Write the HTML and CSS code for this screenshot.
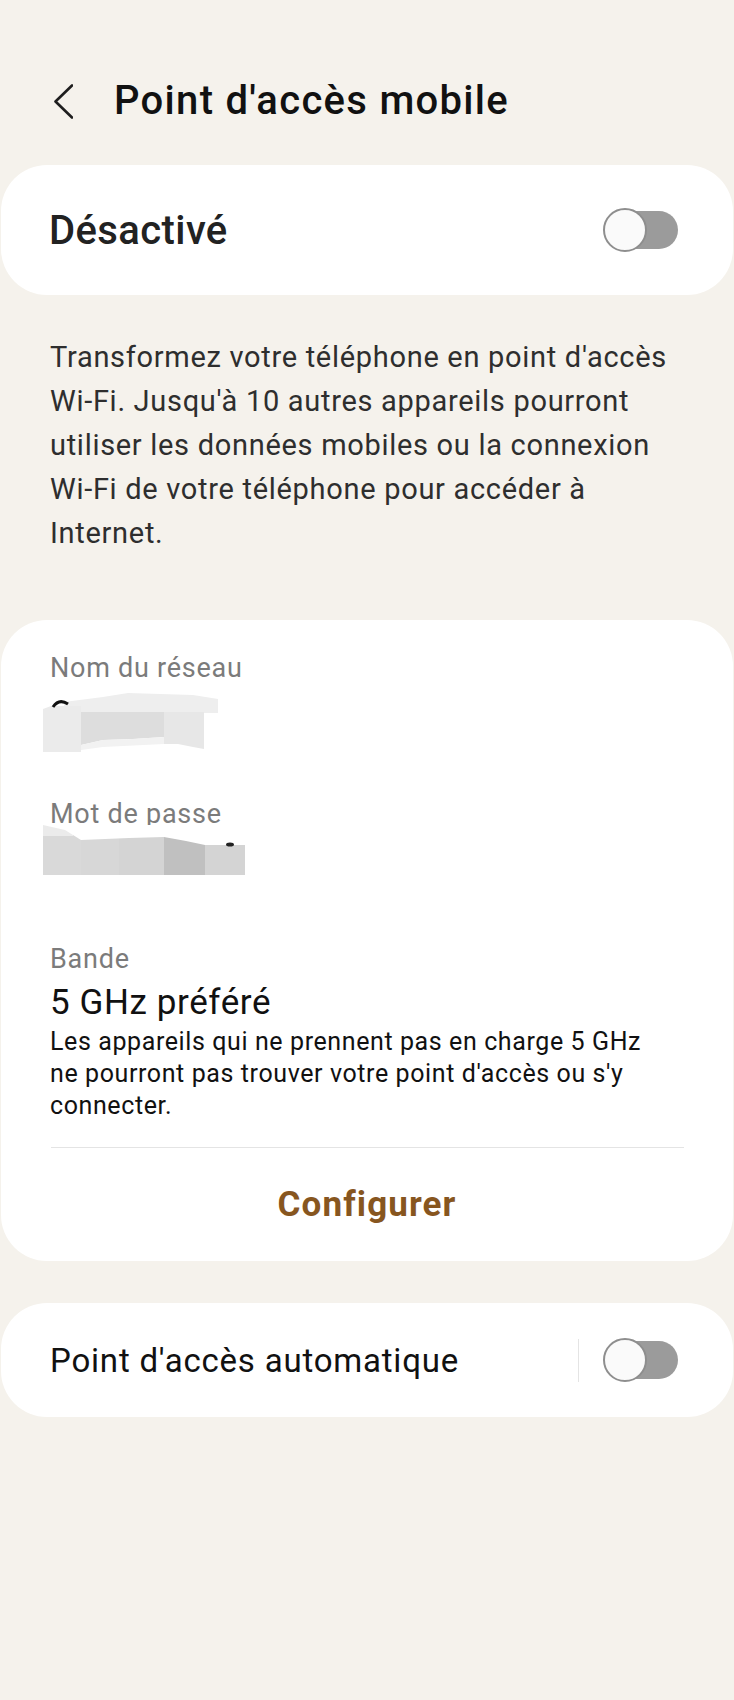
FILE: index.html
```html
<!DOCTYPE html>
<html lang="fr">
<head>
  <meta charset="UTF-8">
  <meta name="viewport" content="width=device-width, initial-scale=1.0">
  <title>Point d'accès mobile</title>
  <link rel="stylesheet" href="styles.css">
</head>
<body>
  <header class="top-bar">
    <button class="back" aria-label="Retour">
      <svg width="20" height="35" viewBox="0 0 20 35"><path d="M19 1.5 L2.5 17.5 L19 33.5" fill="none" stroke="#1e1e1e" stroke-width="2.6" stroke-linecap="round" stroke-linejoin="round"/></svg>
    </button>
    <h1>Point d'accès mobile</h1>
  </header>

  <section class="card main-switch">
    <span>Désactivé</span>
    <span class="switch"></span>
  </section>

  <p class="intro">Transformez votre téléphone en point d'accès Wi-Fi. Jusqu'à 10 autres appareils pourront utiliser les données mobiles ou la connexion Wi-Fi de votre téléphone pour accéder à Internet.</p>

  <section class="card details">
    <div class="field">
      <div class="label">Nom du réseau</div>
      <!-- nom masqué -->
      <svg class="redacted" width="176" height="60" viewBox="0 0 176 60">
        <polygon points="21,9 60,4 85,0 150,2 175,6 175,20 21,20" fill="#eeeeee"/>
        <polygon points="0,16 8,13 38,13 38,59 0,59" fill="#ebebeb"/>
        <polygon points="38,19 121,19 121,44 90,46 60,47 38,52" fill="#dddddd"/>
        <polygon points="38,52 60,47 90,46 121,44 121,51 60,54 38,57" fill="#f2f2f2"/>
        <polygon points="121,19 161,19 161,56 150,54 135,51 121,51" fill="#e7e7e7"/>
        <path d="M10 14 Q16 5 25 11" fill="none" stroke="#111" stroke-width="3"/>
      </svg>
    </div>

    <div class="field pass">
      <div class="label">Mot de passe</div>
      <!-- mot de passe masqué -->
      <svg class="redacted" width="202" height="50" viewBox="0 0 202 50">
        <rect x="0" y="0" width="38" height="50" fill="#d9d9d9"/>
        <rect x="38" y="0" width="38" height="50" fill="#d7d7d7"/>
        <rect x="76" y="0" width="45" height="50" fill="#d4d4d4"/>
        <rect x="121" y="0" width="41" height="50" fill="#c0c0c0"/>
        <rect x="162" y="0" width="40" height="50" fill="#d4d4d4"/>
        <rect x="0" y="0" width="30" height="11" fill="#ebebeb"/>
        <polygon points="0,0 22,5 38,15 86,13 121,12 143,16 162,20 202,20 202,0" fill="#fff"/>
        <ellipse cx="187" cy="19.5" rx="4" ry="2" fill="#222"/>
      </svg>
    </div>

    <div class="field band">
      <div class="label">Bande</div>
      <div class="value">5 GHz préféré</div>
      <div class="hint">Les appareils qui ne prennent pas en charge 5 GHz ne pourront pas trouver votre point d'accès ou s'y connecter.</div>
    </div>

    <div class="divider"></div>
    <button class="configure">Configurer</button>
  </section>

  <section class="card auto-row">
    <span class="auto-label">Point d'accès automatique</span>
    <span class="sep"></span>
    <span class="switch"></span>
  </section>
</body>
</html>
```

FILE: styles.css
```css
body {
  margin: 0;
  background: #f5f2ec;
  font-family: Roboto, "Noto Sans", sans-serif;
  color: #111;
}
.top-bar {
  display: flex;
  align-items: center;
  height: 48px;
  padding: 77px 0 0 53px;
}
.back {
  display: flex;
  width: 20px;
  height: 35px;
  padding: 0;
  margin-right: 41px;
  border: none;
  background: none;
}
.top-bar h1 {
  margin: 0;
  font-size: 40px;
  font-weight: 500;
  line-height: 48px;
  letter-spacing: 1.3px;
  color: #111;
}
.card {
  background: #fff;
  border-radius: 46px;
  margin: 0 1px;
}
.main-switch {
  margin-top: 40px;
  height: 130px;
  display: flex;
  align-items: center;
  justify-content: space-between;
  padding: 0 55px 0 48px;
  font-size: 40px;
  font-weight: 500;
  letter-spacing: 0.4px;
  color: #222;
}
.switch {
  position: relative;
  flex: none;
  width: 68px;
  height: 38px;
  margin-left: 7px;
  border-radius: 19px;
  background: #9b9b9b;
}
.switch::before {
  content: "";
  position: absolute;
  left: -7px;
  top: -3px;
  width: 44px;
  height: 44px;
  box-sizing: border-box;
  border: 2.5px solid #8e8e8e;
  border-radius: 50%;
  background: #fafafa;
}
.intro {
  margin: 40px 0 0;
  padding: 0 48px 0 50px;
  font-size: 29px;
  line-height: 44px;
  letter-spacing: 0.7px;
  color: #2e2e2e;
}
.details {
  margin-top: 65px;
  padding-top: 33px;
}
.field {
  padding: 0 62px 0 49px;
}
.label {
  font-size: 27px;
  line-height: 30px;
  letter-spacing: 0.75px;
  color: #7b7b7b;
}
.redacted {
  display: block;
  margin: 10px 0 0 -7px;
}
.pass {
  margin-top: 46px;
}
.pass .redacted {
  margin-top: -4px;
}
.band {
  margin-top: 69px;
}
.value {
  margin-top: 8px;
  font-size: 35px;
  line-height: 42px;
  letter-spacing: 0.6px;
  color: #111;
}
.hint {
  margin-top: 2px;
  font-size: 25px;
  line-height: 32px;
  letter-spacing: 0.6px;
  color: #111;
}
.divider {
  height: 1px;
  margin: 25px 49px 0 50px;
  background: #e4e4e4;
}
.configure {
  display: block;
  width: 100%;
  height: 113px;
  border: none;
  background: none;
  font-family: inherit;
  font-size: 35px;
  font-weight: 700;
  letter-spacing: 1.1px;
  color: #87561f;
}
.auto-row {
  margin-top: 42px;
  height: 114px;
  display: flex;
  align-items: center;
  padding: 0 55px 0 49px;
  font-size: 33px;
  letter-spacing: 0.8px;
  color: #111;
}
.auto-label {
  flex: 1;
}
.sep {
  width: 1px;
  height: 43px;
  margin-right: 24px;
  background: #e4e4e4;
}
```
